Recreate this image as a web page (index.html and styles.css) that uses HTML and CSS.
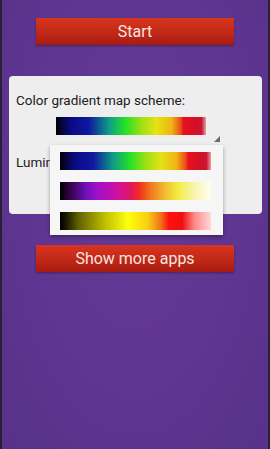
FILE: index.html
```html
<!DOCTYPE html>
<html>
<head>
<meta charset="utf-8">
<link rel="stylesheet" href="styles.css">
</head>
<body>
<div class="page">
  <div class="btn btn-start">Start</div>
  <div class="card">
    <div class="label">Color gradient map scheme:</div>
    <div class="spinner">
      <div class="bar bar-rainbow"></div>
      <div class="caret"></div>
    </div>
    <div class="label label-lum">Luminance:</div>
    <div class="popup">
      <div class="bar bar-rainbow"></div>
      <div class="bar bar-fire"></div>
      <div class="bar bar-heat"></div>
    </div>
  </div>
  <div class="btn btn-more">Show more apps</div>
</div>
</body>
</html>
```
FILE: styles.css
```css
html, body {
  margin: 0;
  padding: 0;
}
body {
  width: 270px;
  height: 449px;
  overflow: hidden;
  background: #2a2034;
  font-family: Roboto, "Noto Sans", sans-serif;
}
.page {
  margin: 0 2px;
  height: 449px;
  background: radial-gradient(ellipse at 50% 40%, #653a98 0%, #5e3590 60%, #57318a 100%);
  padding-top: 18px;
  box-sizing: border-box;
}
.btn {
  margin: 0 34px;
  height: 27px;
  background: linear-gradient(#d8351f, #c02818 55%, #a81b12);
  color: #f8e6e0;
  font-size: 16px;
  line-height: 27px;
  text-align: center;
  box-shadow: 0 1px 2px rgba(0,0,0,0.35);
}
.card {
  position: relative;
  margin: 31px 6px 31px 7px;
  height: 138px;
  box-sizing: border-box;
  background: #eeeeee;
  border-radius: 4px;
  padding: 16px 7px 0 7px;
}
.label {
  font-size: 13.5px;
  line-height: 16px;
  color: #202020;
}
.label-lum {
  margin-top: 19px;
}
.spinner {
  position: relative;
  margin: 9px 0 0 40px;
  width: 164px;
  height: 18px;
}
.bar {
  width: 150px;
  height: 18px;
}
.caret {
  position: absolute;
  right: 0;
  bottom: -7px;
  width: 0;
  height: 0;
  border-left: 6px solid transparent;
  border-bottom: 6px solid #6a6a6a;
}
.bar-rainbow {
  background: linear-gradient(90deg, #000 0%, #06063a 4%, #0a0a86 10%, #1018a0 22%, #109a88 35%, #22e02a 46%, #9ee014 57%, #e6e214 67%, #f0b414 77%, #e8501a 83%, #e8101e 85%, #d01028 94%, #c81830 97%, #e8a0a8 100%);
}
.bar-fire {
  background: linear-gradient(90deg, #000 0%, #2a0038 5%, #7010b8 17%, #a010c8 25%, #d010a0 38%, #e01860 47%, #f02a20 52%, #f07820 60%, #f0c030 70%, #f4ec40 78%, #f8f2a8 88%, #fffff0 100%);
}
.bar-heat {
  background: linear-gradient(90deg, #000 0%, #181800 4%, #606000 12%, #c0c000 30%, #ffff10 45%, #f8d010 58%, #f07018 67%, #ff1010 72%, #f01010 81%, #ff8888 89%, #ffd8d8 100%);
}
.popup {
  position: absolute;
  left: 41px;
  top: 69px;
  width: 173px;
  height: 90px;
  box-sizing: border-box;
  background: #f6f6f6;
  box-shadow: 0 2px 4px rgba(0,0,0,0.35);
  padding: 7px 0 0 10px;
  display: flex;
  flex-direction: column;
  gap: 12px;
}
.popup .bar {
  width: 151px;
}
```
